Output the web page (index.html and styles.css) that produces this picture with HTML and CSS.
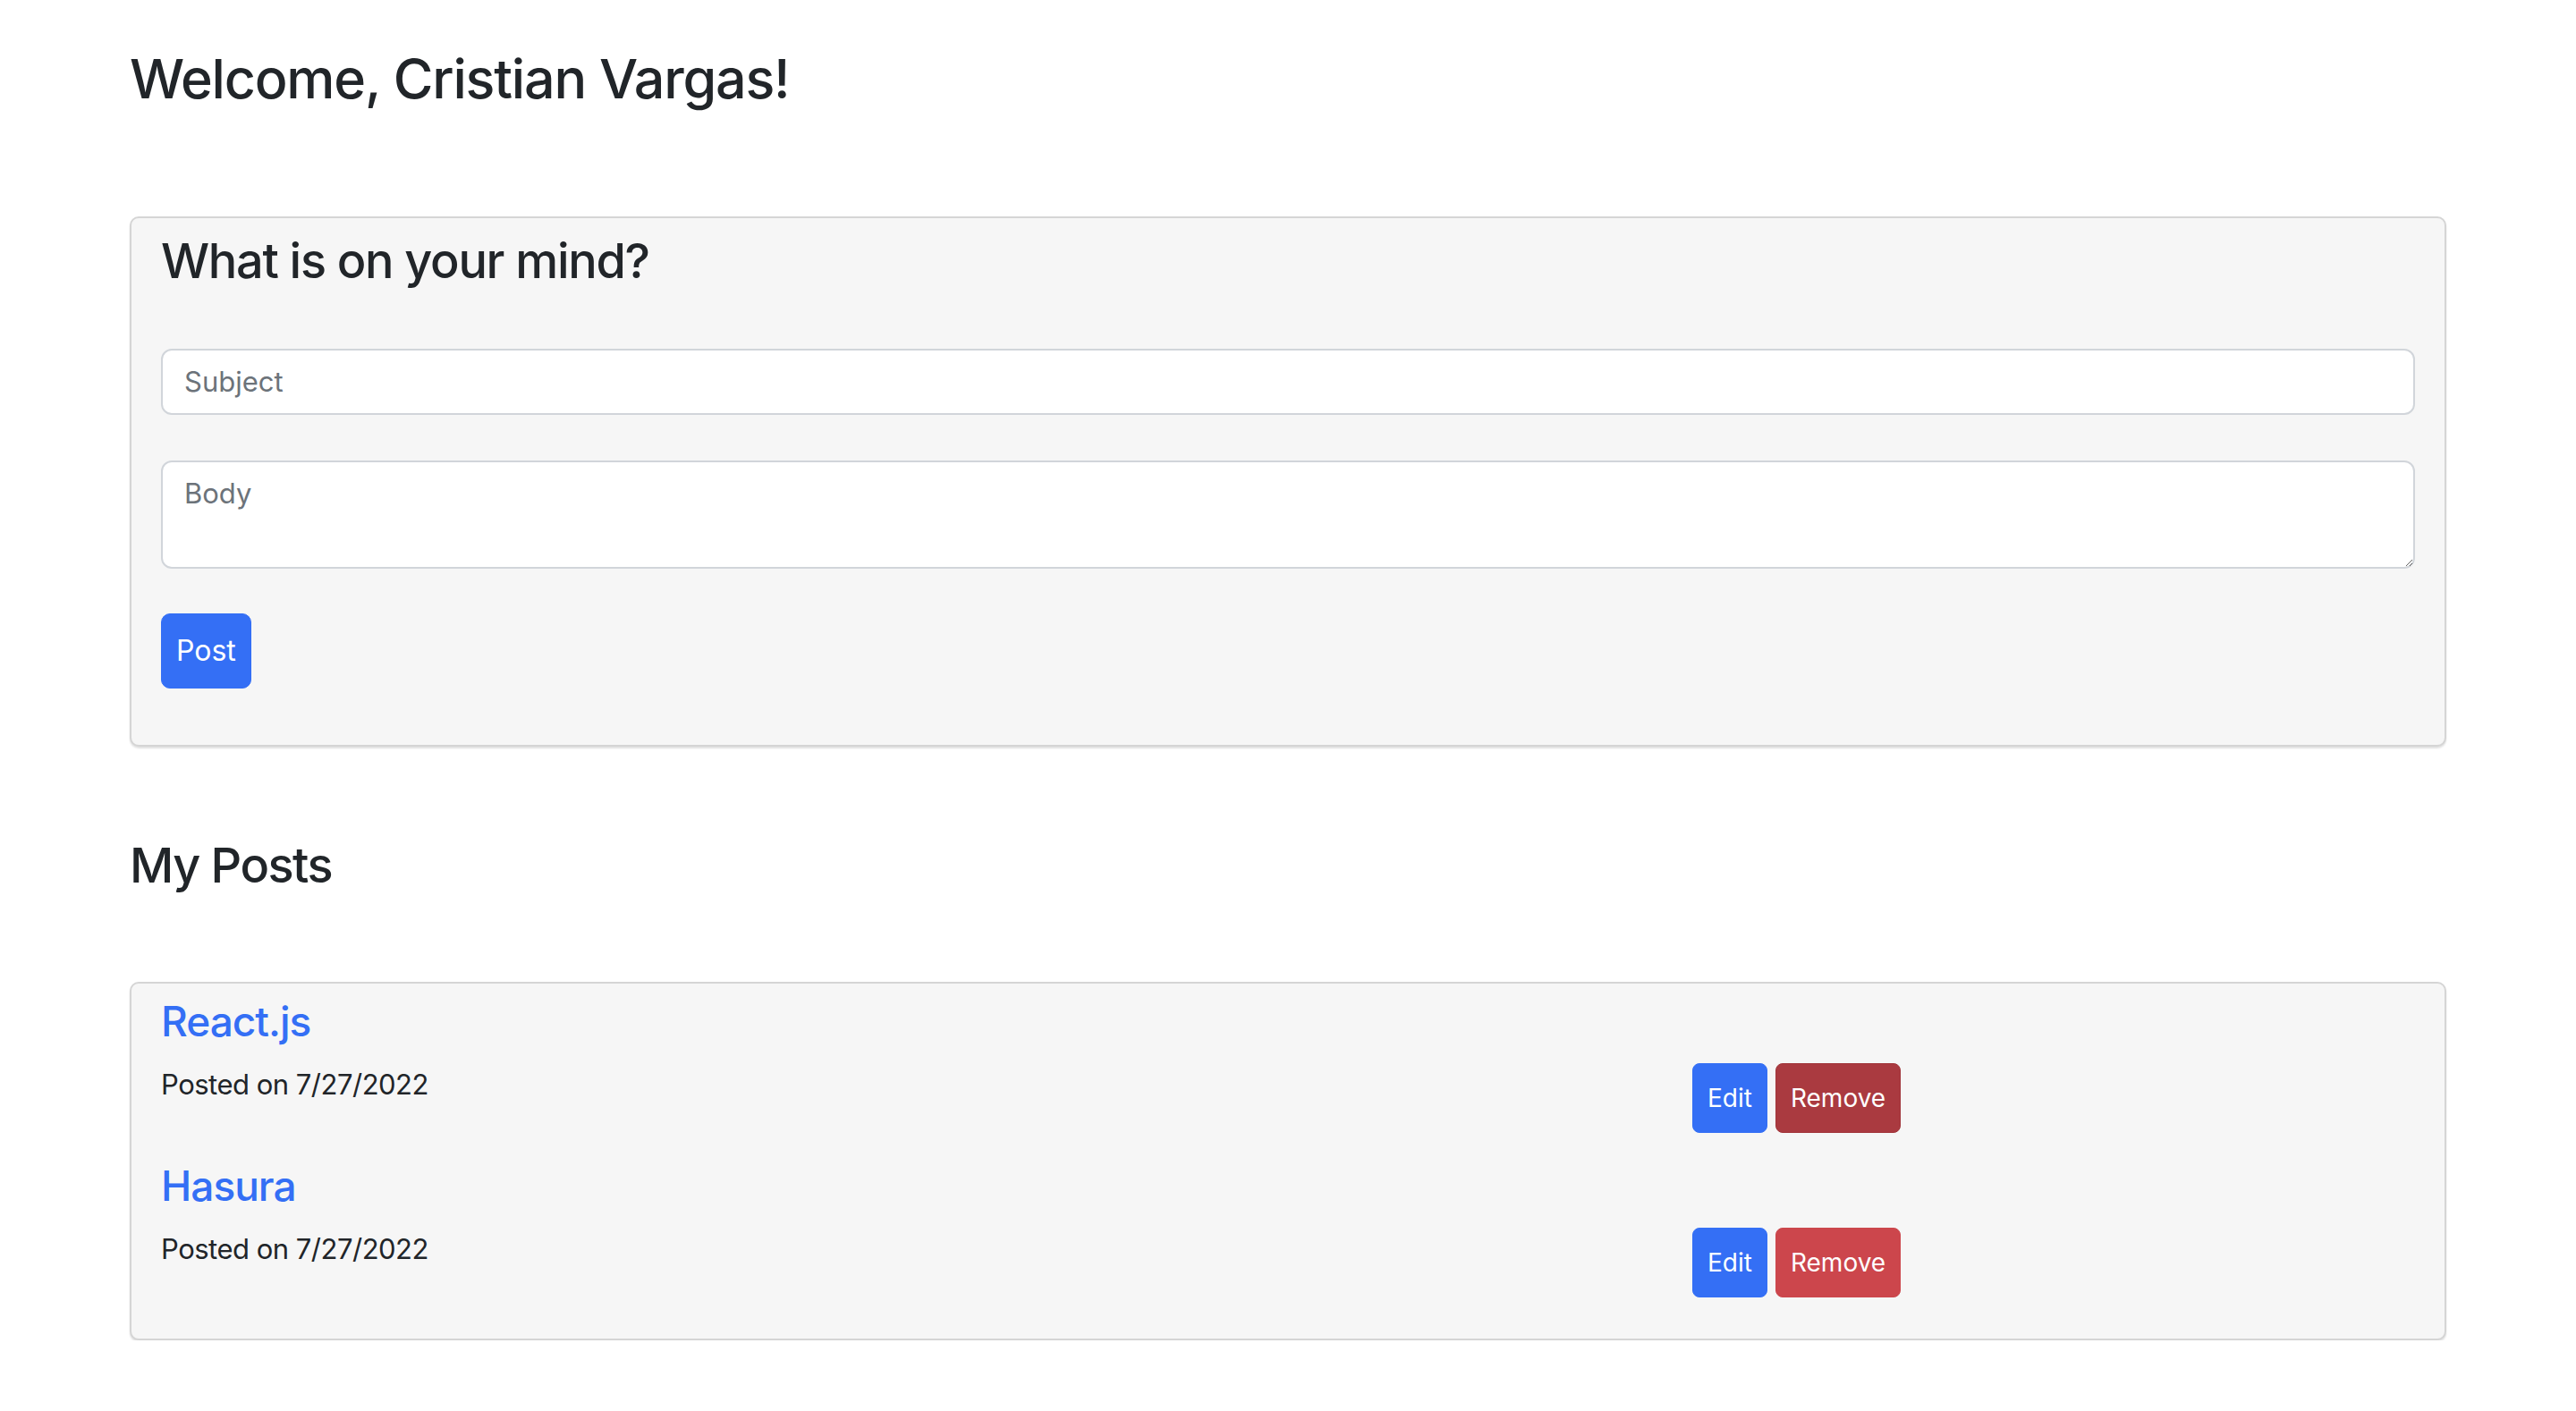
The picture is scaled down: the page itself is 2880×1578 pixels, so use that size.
FILE: index.html
```html
<!DOCTYPE html>
<html lang="en">
<head>
<meta charset="utf-8">
<title>Posts</title>
<link rel="stylesheet" href="styles.css">
</head>
<body>
<div class="page">
  <h1 class="welcome">Welcome, Cristian Vargas!</h1>

  <section class="card compose">
    <h2 class="card-title">What is on your mind?</h2>
    <input class="field" type="text" placeholder="Subject">
    <textarea class="field area" placeholder="Body"></textarea>
    <button class="btn btn-primary btn-post">Post</button>
  </section>

  <h2 class="section-title">My Posts</h2>

  <section class="card posts">
    <article class="post">
      <a class="post-title" href="#">React.js</a>
      <div class="post-row">
        <div class="col-main"><p class="post-date">Posted on 7/27/2022</p></div>
        <div class="col-side">
          <button class="btn btn-primary btn-sm">Edit</button>
          <button class="btn btn-danger-active btn-sm">Remove</button>
        </div>
      </div>
    </article>
    <article class="post">
      <a class="post-title" href="#">Hasura</a>
      <div class="post-row">
        <div class="col-main"><p class="post-date">Posted on 7/27/2022</p></div>
        <div class="col-side">
          <button class="btn btn-primary btn-sm">Edit</button>
          <button class="btn btn-danger btn-sm">Remove</button>
        </div>
      </div>
    </article>
  </section>
</div>
</body>
</html>
```
FILE: styles.css
```css
* { box-sizing: border-box; }
body {
  margin: 0;
  background: #ffffff;
  color: #212529;
  font-family: Inter, "Noto Sans", sans-serif;
}
.page { padding: 0 145px; }
.welcome {
  font-size: 61px;
  font-weight: 500;
  line-height: 1.2;
  letter-spacing: -1.2px;
  margin: 52px 0 117px;
}
.card {
  background: #f6f6f6;
  border: 2px solid #d5d5d5;
  border-radius: 10px;
  box-shadow: 0 2px 2px rgba(0, 0, 0, 0.12);
}
.compose {
  display: flex;
  flex-direction: column;
  align-items: flex-start;
  padding: 16px 33px 63px;
}
.card-title {
  font-size: 54px;
  font-weight: 500;
  line-height: 1.2;
  letter-spacing: -1.3px;
  margin: 0 0 65px;
}
.field {
  width: 100%;
  height: 74px;
  border: 2px solid #d1d5da;
  border-radius: 12px;
  background: #fff;
  padding: 0 24px;
  font-family: inherit;
  font-size: 31px;
  color: #212529;
}
.field::placeholder { color: #6c737a; }
.area {
  height: 121px;
  margin-top: 51px;
  padding: 12px 24px;
  line-height: 1.5;
  resize: vertical;
}
.btn {
  font-family: inherit;
  color: #fff;
  border: 1px solid transparent;
  cursor: pointer;
}
.btn-primary { background: #346ff5; border-color: #346ff5; }
.btn-danger { background: #cc464c; border-color: #cc464c; }
.btn-danger-active { background: #aa3a40; border-color: #a03439; }
.btn-post {
  margin-top: 50px;
  height: 84px;
  padding: 0 16px;
  font-size: 32px;
  line-height: 48px;
  border-radius: 10px;
}
.section-title {
  font-size: 54px;
  font-weight: 500;
  line-height: 1.2;
  letter-spacing: -1.5px;
  margin: 101px 0 97px;
}
.posts { padding: 15px 33px 14px; }
.post { margin-bottom: 32px; }
.post-title {
  display: block;
  color: #346ff5;
  text-decoration: none;
  font-size: 46px;
  font-weight: 500;
  line-height: 1.2;
  letter-spacing: -1px;
  margin-bottom: 19px;
}
.post-row {
  display: flex;
  align-items: flex-start;
  margin: 0 -24px;
}
.col-main { flex: 0 0 66.6667%; padding: 0 24px; }
.col-side { flex: 0 0 33.3333%; padding: 0 24px; display: flex; gap: 9px; }
.post-date {
  margin: 0;
  font-size: 31px;
  line-height: 48px;
  letter-spacing: -0.5px;
}
.btn-sm {
  height: 78px;
  padding: 0 16px;
  font-size: 28px;
  line-height: 42px;
  border-radius: 8px;
}
```
